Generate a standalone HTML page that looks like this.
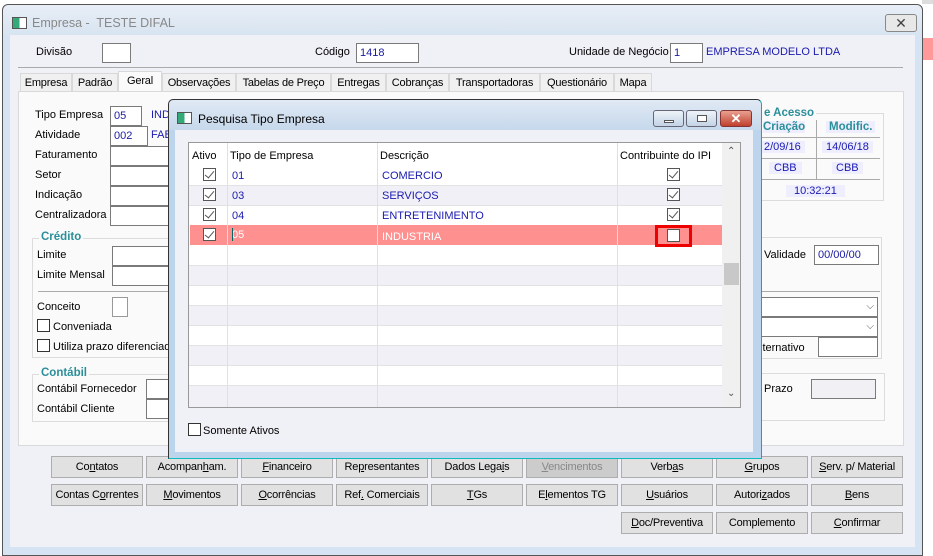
<!DOCTYPE html>
<html><head><meta charset="utf-8"><style>
*{box-sizing:border-box;margin:0;padding:0}
body{width:933px;height:554px;overflow:hidden;background:#fff;font-family:"Liberation Sans",sans-serif;font-size:11px;color:#000;position:relative}
.a{position:absolute}
.t{position:absolute;white-space:nowrap}
.in{position:absolute;background:#fff;border:1px solid #7a7a7a;height:20px;color:#1a1aa0;padding:3px 3px;font-size:11px;white-space:nowrap}
.blue{color:#1a1ab0}
.btn{position:absolute;height:22px;width:92px;background:#e1e1e1;border:1px solid #adadad;text-align:center;line-height:21px;font-size:11px;white-space:nowrap;letter-spacing:-0.2px}
.cb{position:absolute;width:13px;height:13px;border:1px solid #333;background:#fff}
.ck{position:absolute;width:13px;height:13px;border:1px solid #555;background:#fff}
.ck:after{content:"";position:absolute;left:3px;top:0px;width:4px;height:8px;border:solid #555;border-width:0 1.5px 1.5px 0;transform:rotate(40deg)}
.tab{position:absolute;top:73px;height:19px;border:1px solid #d9d9d9;background:#f0f0f0;padding-top:3px;text-align:center;font-size:11px;white-space:nowrap;letter-spacing:-0.2px}
.grp{position:absolute;border:1px solid #dcdcdc}
.gl{position:absolute;background:#fafafa;color:#2b8f9a;font-weight:bold;padding:0 2px;font-size:11.5px}
</style></head><body>
<div class="a" style="left:922px;top:38px;width:11px;height:22px;background:#f99"></div>
<div class="a" style="left:922px;top:0;width:11px;height:4px;background:#ddd"></div>
<div class="a" style="left:2px;top:4px;width:921px;height:552px;border:1px solid #555;border-radius:6px 6px 0 0;background:#d5e3f2"></div>
<div class="a" style="left:3px;top:5px;width:919px;height:30px;background:linear-gradient(#e8eef6,#d8e4f1);border-radius:6px 6px 0 0"></div>
<div class="a" style="left:12px;top:17px;width:15px;height:12px;border:1px solid #555;background:linear-gradient(90deg,#3a7 0 50%,#fff 50%)"></div>
<div class="t" style="left:32px;top:16px;font-size:12.5px;color:#888">Empresa -&nbsp; TESTE DIFAL</div>
<div class="a" style="left:885px;top:14px;width:32px;height:18px;border:1px solid #888;border-radius:3px;background:#e8e8e8;text-align:center;font-size:14px;line-height:16px;color:#444">✕</div>
<div class="a" style="left:10px;top:35px;width:905px;height:512px;background:#f0f0f7"></div>
<div class="t" style="left:36px;top:46px">Divisão</div>
<div class="in" style="left:102px;top:43px;width:29px"></div>
<div class="t" style="left:315px;top:46px">Código</div>
<div class="in" style="left:356px;top:43px;width:63px">1418</div>
<div class="t" style="left:569px;top:46px">Unidade de Negócio</div>
<div class="in" style="left:670px;top:43px;width:33px">1</div>
<div class="t blue" style="left:706px;top:46px">EMPRESA MODELO LTDA</div>
<div class="a" style="left:18px;top:67px;width:885px;height:1px;background:#aaa"></div>
<div class="tab" style="left:20px;width:52px">Empresa</div>
<div class="tab" style="left:72px;width:46px">Padrão</div>
<div class="tab" style="left:118px;top:71px;height:22px;width:44px;background:#fafafa;border-bottom:none">Geral</div>
<div class="tab" style="left:162px;width:74px">Observações</div>
<div class="tab" style="left:236px;width:95px">Tabelas de Preço</div>
<div class="tab" style="left:331px;width:55px">Entregas</div>
<div class="tab" style="left:386px;width:63px">Cobranças</div>
<div class="tab" style="left:449px;width:91px">Transportadoras</div>
<div class="tab" style="left:540px;width:74px">Questionário</div>
<div class="tab" style="left:614px;width:38px">Mapa</div>
<div class="a" style="left:18px;top:91px;width:886px;height:355px;background:#fafafa;border:1px solid #d9d9d9"></div>
<div class="t" style="left:35px;top:109px">Tipo Empresa</div><div class="in" style="left:110px;top:106px;width:32px">05</div><div class="t blue" style="left:151px;top:109px">IND</div>
<div class="t" style="left:35px;top:129px">Atividade</div><div class="in" style="left:110px;top:126px;width:38px">002</div><div class="t blue" style="left:151px;top:129px">FAB</div>
<div class="t" style="left:35px;top:149px">Faturamento</div><div class="in" style="left:110px;top:146px;width:70px"></div>
<div class="t" style="left:35px;top:169px">Setor</div><div class="in" style="left:110px;top:166px;width:70px"></div>
<div class="t" style="left:35px;top:189px">Indicação</div><div class="in" style="left:110px;top:186px;width:70px"></div>
<div class="t" style="left:35px;top:209px">Centralizadora</div><div class="in" style="left:110px;top:206px;width:70px"></div>
<div class="grp" style="left:32px;top:238px;width:160px;height:120px"></div>
<div class="gl" style="left:39px;top:231px">Crédito</div>
<div class="t" style="left:37px;top:249px">Limite</div><div class="in" style="left:112px;top:246px;width:70px"></div>
<div class="t" style="left:37px;top:269px">Limite Mensal</div><div class="in" style="left:112px;top:266px;width:70px"></div>
<div class="a" style="left:38px;top:291px;width:140px;height:1px;background:#aaa"></div>
<div class="t" style="left:37px;top:301px">Conceito</div><div class="in" style="left:112px;top:297px;width:16px;border-color:#999"></div>
<div class="cb" style="left:37px;top:319px"></div><div class="t" style="left:53px;top:321px">Conveniada</div>
<div class="cb" style="left:37px;top:339px"></div><div class="t" style="left:53px;top:341px">Utiliza prazo diferenciado</div>
<div class="grp" style="left:32px;top:374px;width:160px;height:48px"></div>
<div class="gl" style="left:39px;top:367px">Contábil</div>
<div class="t" style="left:37px;top:383px">Contábil Fornecedor</div><div class="in" style="left:146px;top:379px;width:30px"></div>
<div class="t" style="left:37px;top:403px">Contábil Cliente</div><div class="in" style="left:146px;top:399px;width:30px"></div>
<div class="grp" style="left:760px;top:113px;width:124px;height:88px"></div>
<div class="gl" style="left:762px;top:107px">e Acesso</div>
<div class="t" style="left:763px;top:121px;color:#2b8f9a;font-weight:bold;font-size:11.5px;background:#eef">Criação</div>
<div class="t" style="left:826px;top:121px;color:#2b8f9a;font-weight:bold;font-size:11.5px;background:#eef;padding:0 3px">Modific.</div>
<div class="a" style="left:760px;top:137px;width:120px;height:1px;background:#aaa"></div>
<div class="a" style="left:816px;top:120px;width:1px;height:60px;background:#aaa"></div>
<div class="t blue" style="left:760px;top:141px;background:#eef;padding:0 4px">2/09/16</div>
<div class="t blue" style="left:822px;top:141px;background:#eef;padding:0 4px">14/06/18</div>
<div class="a" style="left:760px;top:158px;width:120px;height:1px;background:#aaa"></div>
<div class="t blue" style="left:769px;top:162px;background:#eef;padding:0 5px">CBB</div>
<div class="t blue" style="left:832px;top:162px;background:#eef;padding:0 4px">CBB</div>
<div class="a" style="left:760px;top:179px;width:120px;height:1px;background:#aaa"></div>
<div class="t blue" style="left:786px;top:185px;background:#eef;padding:0 8px">10:32:21</div>
<div class="grp" style="left:755px;top:237px;width:127px;height:122px"></div>
<div class="t" style="left:764px;top:249px">Validade</div><div class="in" style="left:814px;top:245px;width:65px">00/00/00</div>
<div class="a" style="left:755px;top:291px;width:125px;height:1px;background:#aaa"></div>
<div class="in" style="left:755px;top:297px;width:123px;color:#555;text-align:right;font-size:10px">⌵</div>
<div class="in" style="left:755px;top:317px;width:123px;color:#555;text-align:right;font-size:10px">⌵</div>
<div class="t" style="left:760px;top:342px">lternativo</div><div class="in" style="left:818px;top:337px;width:60px"></div>
<div class="grp" style="left:755px;top:373px;width:130px;height:48px"></div>
<div class="t" style="left:764px;top:383px">Prazo</div><div class="in" style="left:811px;top:379px;width:65px;background:#f0f0f5"></div>
<div class="btn" style="left:51px;top:456px">Co<u>n</u>tatos</div>
<div class="btn" style="left:146px;top:456px">Acompan<u>h</u>am.</div>
<div class="btn" style="left:241px;top:456px"><u>F</u>inanceiro</div>
<div class="btn" style="left:336px;top:456px">Re<u>p</u>resentantes</div>
<div class="btn" style="left:431px;top:456px">Dados Lega<u>i</u>s</div>
<div class="btn" style="left:526px;top:456px;background:#ccc;color:#888"><u>V</u>encimentos</div>
<div class="btn" style="left:621px;top:456px">Verb<u>a</u>s</div>
<div class="btn" style="left:716px;top:456px"><u>G</u>rupos</div>
<div class="btn" style="left:811px;top:456px"><u>S</u>erv. p/ Material</div>
<div class="btn" style="left:51px;top:484px">Contas C<u>o</u>rrentes</div>
<div class="btn" style="left:146px;top:484px"><u>M</u>ovimentos</div>
<div class="btn" style="left:241px;top:484px"><u>O</u>corrências</div>
<div class="btn" style="left:336px;top:484px">Ref<u>.</u> Comerciais</div>
<div class="btn" style="left:431px;top:484px"><u>T</u>Gs</div>
<div class="btn" style="left:526px;top:484px">E<u>l</u>ementos TG</div>
<div class="btn" style="left:621px;top:484px"><u>U</u>suários</div>
<div class="btn" style="left:716px;top:484px">Autori<u>z</u>ados</div>
<div class="btn" style="left:811px;top:484px"><u>B</u>ens</div>
<div class="btn" style="left:621px;top:512px"><u>D</u>oc/Preventiva</div>
<div class="btn" style="left:716px;top:512px">Complemento</div>
<div class="btn" style="left:811px;top:512px"><u>C</u>onfirmar</div>
<div class="a" style="left:168px;top:99px;width:594px;height:360px;border:1px solid #333;border-radius:5px 5px 0 0;background:#bcd5ec;border-bottom-color:#1bb;border-right-color:#1aa"></div>
<div class="a" style="left:169px;top:100px;width:592px;height:30px;background:linear-gradient(#e0e9f4,#c6d8ec);border-radius:5px 5px 0 0"></div>
<div class="a" style="left:177px;top:112px;width:15px;height:12px;border:1px solid #555;background:linear-gradient(90deg,#3a7 0 50%,#fff 50%)"></div>
<div class="t" style="left:198px;top:112px;font-size:12px">Pesquisa Tipo Empresa</div>
<div class="a" style="left:653px;top:110px;width:31px;height:17px;border:1px solid #667;border-radius:3px;background:linear-gradient(#eef3f9,#c3d3e6)"><div class="a" style="left:10px;top:9px;width:10px;height:3px;border:1px solid #555;background:#fff"></div></div>
<div class="a" style="left:686px;top:110px;width:31px;height:17px;border:1px solid #667;border-radius:3px;background:linear-gradient(#eef3f9,#c3d3e6)"><div class="a" style="left:10px;top:4px;width:10px;height:7px;border:1px solid #555;background:#fff"></div></div>
<div class="a" style="left:720px;top:110px;width:32px;height:17px;border:1px solid #833;border-radius:3px;background:linear-gradient(#e9a090,#c0402e);color:#fff;text-align:center;font-weight:bold;line-height:15px;font-size:13px">✕</div>
<div class="a" style="left:175px;top:130px;width:578px;height:322px;background:#f0f0f7"></div>
<div class="a" style="left:188px;top:142px;width:553px;height:266px;border:1px solid #999;background:#fff;overflow:hidden">
 <div class="a" style="left:0;top:42px;width:533px;height:20px;background:#f0f0f6;border-top:1px solid #e2e2e2"></div>
 <div class="a" style="left:0;top:62px;width:533px;height:20px;background:#fff;border-top:1px solid #e2e2e2"></div>
 <div class="a" style="left:1px;top:82px;width:532px;height:20px;background:#ff9090"></div>
 <div class="a" style="left:0;top:122px;width:533px;height:20px;background:#f0f0f6;border-top:1px solid #e2e2e2"></div>
 <div class="a" style="left:0;top:142px;width:533px;height:20px;background:#fff;border-top:1px solid #e2e2e2"></div>
 <div class="a" style="left:0;top:162px;width:533px;height:20px;background:#f0f0f6;border-top:1px solid #e2e2e2"></div>
 <div class="a" style="left:0;top:182px;width:533px;height:20px;background:#fff;border-top:1px solid #e2e2e2"></div>
 <div class="a" style="left:0;top:202px;width:533px;height:20px;background:#f0f0f6;border-top:1px solid #e2e2e2"></div>
 <div class="a" style="left:0;top:222px;width:533px;height:20px;background:#fff;border-top:1px solid #e2e2e2"></div>
 <div class="a" style="left:0;top:242px;width:533px;height:22px;background:#f0f0f6;border-top:1px solid #e2e2e2"></div>
 <div class="a" style="left:38px;top:0;width:1px;height:266px;background:#e0e0e0"></div>
 <div class="a" style="left:188px;top:0;width:1px;height:266px;background:#e0e0e0"></div>
 <div class="a" style="left:428px;top:0;width:1px;height:266px;background:#e0e0e0"></div>
 <div class="a" style="left:533px;top:0;width:18px;height:266px;background:#f0f0f0"></div>
 <div class="a" style="left:535px;top:120px;width:15px;height:22px;background:#c8c8c8"></div>
 <div class="t" style="left:538px;top:3px;font-size:10px;color:#555">⌃</div>
 <div class="t" style="left:538px;top:245px;font-size:10px;color:#555">⌄</div>
 <div class="t" style="left:3px;top:7px">Ativo</div>
 <div class="t" style="left:41px;top:7px">Tipo de Empresa</div>
 <div class="t" style="left:191px;top:7px">Descrição</div>
 <div class="t" style="left:431px;top:7px">Contribuinte do IPI</div>
 <div class="ck" style="left:14px;top:25px"></div><div class="t blue" style="left:43px;top:27px">01</div><div class="t blue" style="left:193px;top:27px">COMERCIO</div><div class="ck" style="left:478px;top:25px"></div>
 <div class="ck" style="left:14px;top:45px"></div><div class="t blue" style="left:43px;top:47px">03</div><div class="t blue" style="left:193px;top:47px">SERVIÇOS</div><div class="ck" style="left:478px;top:45px"></div>
 <div class="ck" style="left:14px;top:65px"></div><div class="t blue" style="left:43px;top:67px">04</div><div class="t blue" style="left:193px;top:67px">ENTRETENIMENTO</div><div class="ck" style="left:478px;top:65px"></div>
 <div class="ck" style="left:14px;top:85px"></div><div class="t" style="left:43px;top:86px;color:#fff">05</div><div class="a" style="left:43px;top:85px;width:1px;height:13px;background:#066"></div><div class="t" style="left:193px;top:88px;color:#fff">INDUSTRIA</div>
 <div class="a" style="left:466px;top:82px;width:37px;height:22px;border:3px solid #e00"></div>
 <div class="cb" style="left:478px;top:86px;border-color:#555"></div>
</div>
<div class="cb" style="left:188px;top:423px"></div>
<div class="t" style="left:203px;top:425px">Somente Ativos</div>
</body></html>
